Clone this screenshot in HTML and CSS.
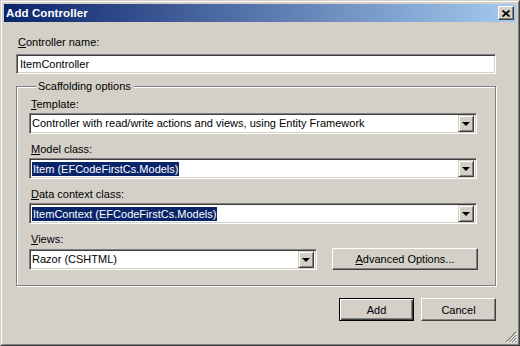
FILE: index.html
```html
<!DOCTYPE html>
<html>
<head>
<meta charset="utf-8">
<link rel="stylesheet" href="styles.css">
</head>
<body>
<div class="window">
  <div class="frame">
    <div class="titlebar">
      <span class="title">Add Controller</span>
      <span class="close">
        <svg width="8" height="7" viewBox="0 0 8 7"><path d="M0.5 0.5 L7.5 6.5 M7.5 0.5 L0.5 6.5" stroke="#000" stroke-width="1.7" fill="none"/></svg>
      </span>
    </div>
    <div class="content">
      <div class="label top"><u>C</u>ontroller name:</div>
      <div class="field textbox"><span class="val">ItemController</span></div>
      <fieldset class="group">
        <legend>Scaffolding options</legend>
        <div class="label"><u>T</u>emplate:</div>
        <div class="field combo"><span class="val">Controller with read/write actions and views, using Entity Framework</span><span class="drop"><span class="arrow"></span></span></div>
        <div class="label"><u>M</u>odel class:</div>
        <div class="field combo"><span class="val sel">Item (EFCodeFirstCs.Models)</span><span class="drop"><span class="arrow"></span></span></div>
        <div class="label"><u>D</u>ata context class:</div>
        <div class="field combo"><span class="val sel">ItemContext (EFCodeFirstCs.Models)</span><span class="drop"><span class="arrow"></span></span></div>
        <div class="label"><u>V</u>iews:</div>
        <div class="row">
          <div class="field combo views"><span class="val">Razor (CSHTML)</span><span class="drop"><span class="arrow"></span></span></div>
          <div class="btn adv"><u>A</u>dvanced Options...</div>
        </div>
      </fieldset>
      <div class="buttons">
        <div class="btn default">Add</div>
        <div class="btn">Cancel</div>
      </div>
    </div>
    <svg class="grip" width="12" height="12" viewBox="0 0 12 12">
      <path d="M11 1 L1 11 M11 4 L4 11 M11 7 L7 11 M11 10 L10 11" stroke="#808080" stroke-width="1.2" fill="none"/>
      <path d="M12 2 L2 12 M12 5 L5 12 M12 8 L8 12" stroke="#fff" stroke-width="1" fill="none"/>
    </svg>
  </div>
</div>
</body>
</html>
```
FILE: styles.css
```css
* { box-sizing: border-box; }
html, body { margin: 0; padding: 0; }
body {
  width: 520px;
  height: 346px;
  overflow: hidden;
  background: #d4d0c8;
  font-family: "Liberation Sans", Arial, sans-serif;
  font-size: 11px;
  color: #000;
}
.window {
  width: 520px;
  height: 346px;
  border: 1px solid;
  border-color: #d4d0c8 #404040 #404040 #d4d0c8;
}
.frame {
  position: relative;
  height: 100%;
  border: 1px solid;
  border-color: #fff #808080 #808080 #fff;
  padding: 2px;
  background: #d4d0c8;
}
.titlebar {
  height: 18px;
  background: linear-gradient(to right, #0a246a, #a6caf0);
  display: flex;
  align-items: center;
  justify-content: space-between;
  padding: 0 2px 0 2px;
}
.title {
  color: #fff;
  font-weight: bold;
  font-size: 11.5px;
  letter-spacing: 0.1px;
}
.close {
  width: 16px;
  height: 14px;
  background: #d4d0c8;
  border: 1px solid;
  border-color: #fff #404040 #404040 #fff;
  box-shadow: inset -1px -1px 0 #808080;
  display: flex;
  align-items: center;
  justify-content: center;
}
.content {
  padding: 14px 20px 0 12px;
}
.label {
  height: 13px;
  line-height: 13px;
  padding-left: 2px;
  margin-bottom: 2px;
  white-space: nowrap;
}
.label.top { margin-bottom: 5px; }
.field {
  background: #fff;
  border: 1px solid;
  border-color: #808080 #fff #fff #808080;
  box-shadow: inset 1px 1px 0 #404040, inset -1px -1px 0 #d4d0c8;
  display: flex;
  align-items: center;
  padding: 0 2px 0 2px;
  white-space: nowrap;
}
.textbox {
  height: 20px;
  padding-left: 3px;
  margin-bottom: 6px;
}
.combo {
  height: 21px;
  margin-bottom: 9px;
  justify-content: space-between;
}
.val { line-height: 13px; }
.sel {
  background: #0a246a;
  color: #fff;
  line-height: 14px;
  padding: 0 1px;
}
.drop {
  width: 16px;
  height: 17px;
  background: #d4d0c8;
  border: 1px solid;
  border-color: #d4d0c8 #404040 #404040 #d4d0c8;
  box-shadow: inset 1px 1px 0 #fff, inset -1px -1px 0 #808080;
  display: flex;
  align-items: center;
  justify-content: center;
  flex: none;
}
.arrow {
  width: 0;
  height: 0;
  border-left: 4px solid transparent;
  border-right: 4px solid transparent;
  border-top: 4px solid #000;
  margin-top: 1px;
}
.group {
  margin: 0;
  padding: 5px 18px 15px 12px;
  border: 1px solid #808080;
  box-shadow: inset 1px 1px 0 #fff, 1px 1px 0 #fff;
  min-width: 0;
}
.group legend {
  padding: 0 3px 0 2px;
  margin-left: 7px;
  line-height: 13px;
  background: #d4d0c8;
}
.row {
  display: flex;
  align-items: center;
}
.views {
  width: 288px;
  margin-bottom: 0;
}
.btn {
  height: 23px;
  width: 75px;
  display: flex;
  align-items: center;
  justify-content: center;
  background: #d4d0c8;
  border: 1px solid;
  border-color: #fff #404040 #404040 #fff;
  box-shadow: inset -1px -1px 0 #808080;
}
.adv {
  width: 146px;
  height: 22px;
  margin-left: auto;
  margin-right: -1px;
}
.buttons {
  display: flex;
  justify-content: flex-end;
  gap: 7px;
  margin-top: 12px;
}
.default {
  border: 1px solid #000;
  box-shadow: inset 1px 1px 0 #fff, inset -1px -1px 0 #404040, inset -2px -2px 0 #808080;
}
.grip {
  position: absolute;
  right: 1px;
  bottom: 1px;
}
```
